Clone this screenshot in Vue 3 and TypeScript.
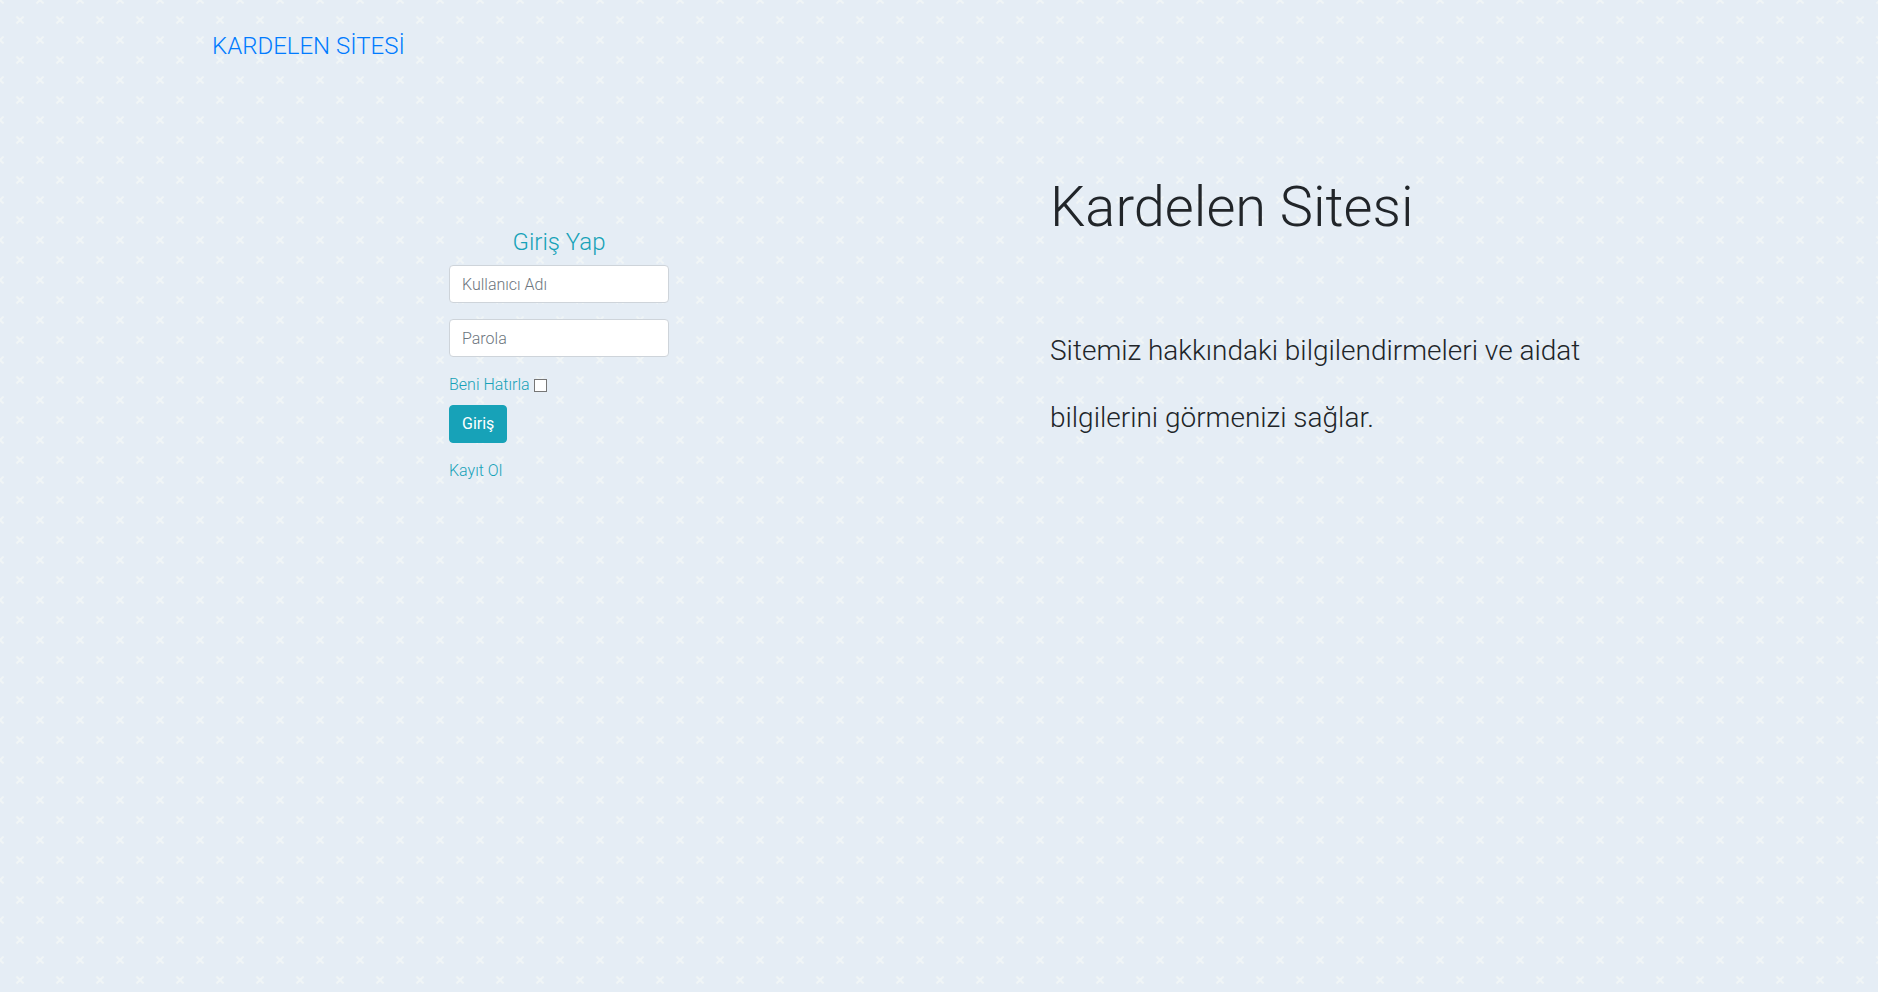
<script setup lang="ts">
import { ref } from 'vue'

const username = ref('')
const password = ref('')
const remember = ref(false)
</script>

<template>
  <div class="page">
    <header class="topbar">
      <a class="brand" href="#">KARDELEN SİTESİ</a>
    </header>
    <main class="content">
      <section class="login">
        <form class="login-form" @submit.prevent>
          <h2 class="login-title">Giriş Yap</h2>
          <input v-model="username" class="field" type="text" placeholder="Kullanıcı Adı" aria-label="Kullanıcı Adı" />
          <input v-model="password" class="field" type="password" placeholder="Parola" aria-label="Parola" />
          <div class="remember">
            <label for="remember">Beni Hatırla</label>
            <input id="remember" v-model="remember" class="check" type="checkbox" />
          </div>
          <button class="submit" type="submit">Giriş</button>
          <a class="register" href="#">Kayıt Ol</a>
        </form>
      </section>
      <section class="intro">
        <h1 class="intro-title">Kardelen Sitesi</h1>
        <p class="intro-text">Sitemiz hakkındaki bilgilendirmeleri ve aidat bilgilerini görmenizi sağlar.</p>
      </section>
    </main>
  </div>
</template>

<style>
body {
  background-color: #e5edf5;
  background-image: url("data:image/svg+xml,%3Csvg width='40' height='40' viewBox='0 0 40 40' xmlns='http://www.w3.org/2000/svg'%3E%3Cpath d='M0 38.59l2.83-2.83 1.41 1.41L1.41 40H0v-1.41zM0 1.4l2.83 2.83 1.41-1.41L1.41 0H0v1.41zM38.59 40l-2.83-2.83 1.41-1.41L40 38.59V40h-1.41zM40 1.41l-2.83 2.83-1.41-1.41L38.59 0H40v1.41zM20 18.6l2.83-2.83 1.41 1.41L21.41 20l2.83 2.83-1.41 1.41L20 21.41l-2.83 2.83-1.41-1.41L18.59 20l-2.83-2.83 1.41-1.41L20 18.59z' fill='%23f7faf7' fill-opacity='0.6' fill-rule='evenodd'/%3E%3C/svg%3E");
}
</style>

<style scoped>
.page {
  box-sizing: border-box;
  min-height: 100vh;
  padding: 28px 200px 0 212px;
  font-family: Roboto, "Liberation Sans", sans-serif;
  font-size: 16px;
  font-weight: 300;
  line-height: 24px;
  color: #212529;
}

.brand {
  font-size: 24px;
  line-height: 36px;
  color: #007bff;
  text-decoration: none;
}

.content {
  display: grid;
  grid-template-columns: minmax(0, 694fr) minmax(0, 628fr);
  column-gap: 144px;
  margin-top: 110px;
}

.login-form {
  display: flex;
  flex-direction: column;
  align-items: flex-start;
  width: 220px;
  margin: 54px auto 0;
  color: #17a2b8;
}

.login-title {
  align-self: center;
  margin: 0 0 8px;
  font-size: 24px;
  font-weight: 300;
  line-height: 29px;
}

.field {
  box-sizing: border-box;
  width: 100%;
  height: 38px;
  margin-bottom: 16px;
  padding: 6px 12px;
  border: 1px solid #ced4da;
  border-radius: 4px;
  background: #fff;
  color: #495057;
  font: inherit;
}

.field::placeholder {
  color: #6c757d;
  opacity: 1;
}

.remember {
  display: flex;
  align-items: center;
  gap: 4px;
  margin-bottom: 8px;
}

.check {
  appearance: none;
  box-sizing: border-box;
  width: 13px;
  height: 13px;
  margin: 0;
  border: 1px solid #767676;
  background: #fff;
}

.check:checked {
  background: #17a2b8;
}

.submit {
  height: 38px;
  padding: 6px 12px;
  border: 1px solid #17a2b8;
  border-radius: 4px;
  background: #17a2b8;
  color: #fff;
  font: inherit;
  font-weight: 400;
}

.register {
  margin-top: 16px;
  color: #17a2b8;
  text-decoration: none;
}

.intro-title {
  margin: 0;
  font-size: 56px;
  font-weight: 300;
  line-height: 67px;
}

.intro-text {
  max-width: 600px;
  margin: 76px 0 0;
  font-size: 28px;
  line-height: 67px;
}
</style>
